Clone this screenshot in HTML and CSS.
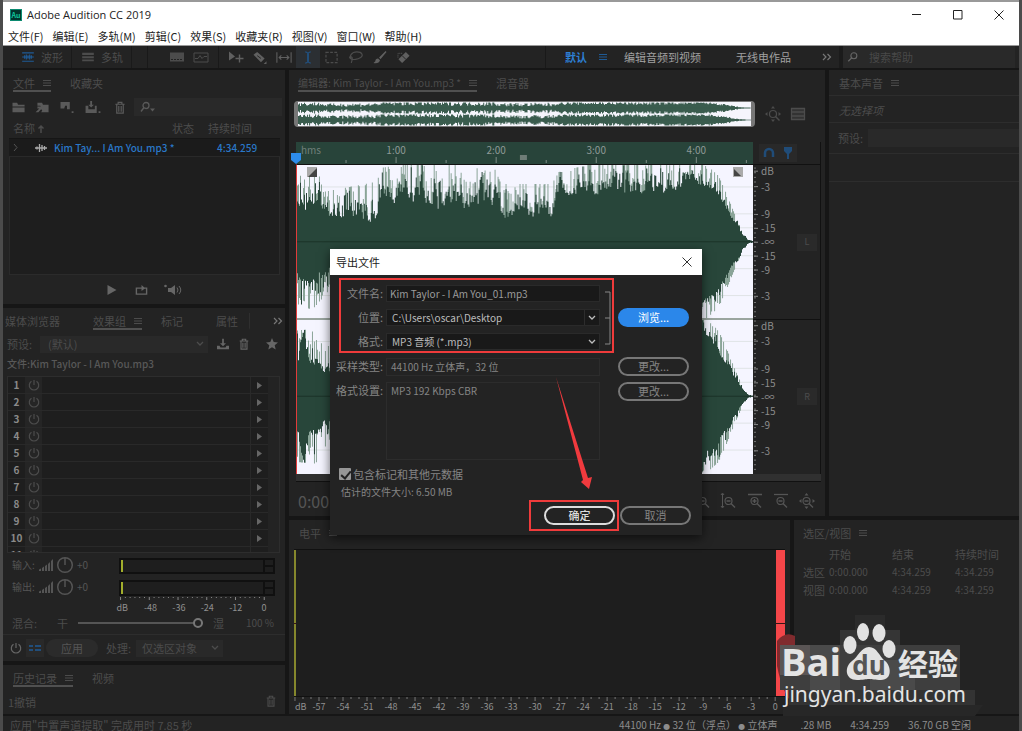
FILE: index.html
```html
<!DOCTYPE html>
<html lang="zh-CN">
<head>
<meta charset="utf-8">
<title>Adobe Audition CC 2019</title>
<link rel="stylesheet" href="styles.css">
</head>
<body>
<svg class="defs" aria-hidden="true">
  <symbol id="menu" viewBox="0 0 8 8"><path d="M0 1.5h8M0 4h8M0 6.5h8" stroke="currentColor"/></symbol>
  <symbol id="chev" viewBox="0 0 8 6"><path d="M1 1l3 3 3-3" fill="none" stroke="currentColor" stroke-width="1.3"/></symbol>
  <symbol id="more" viewBox="0 0 10 8"><path d="M1 1l3 3-3 3M5.500 1l3 3-3 3" fill="none" stroke="currentColor" stroke-width="1.200"/></symbol>
  <symbol id="power" viewBox="0 0 12 12"><path d="M3.500 2.300a4.700 4.700 0 1 0 5 0M6 1v5" fill="none" stroke="currentColor" stroke-width="1.200"/></symbol>
  <symbol id="trash" viewBox="0 0 12 14"><path d="M1 3.500h10M4 3V1.500h4V3M2.500 4v9h7V4M4.700 5.500v6M7.300 5.500v6" fill="none" stroke="currentColor" stroke-width="1.300"/></symbol>
  <symbol id="search" viewBox="0 0 14 12"><circle cx="8" cy="4.500" r="3.500" fill="none" stroke="currentColor" stroke-width="1.300"/><path d="M5.500 7L1.500 11" stroke="currentColor" stroke-width="1.500"/></symbol>
  <symbol id="save" viewBox="0 0 16 14"><path d="M1 9h3l1 2h6l1-2h3v4H1zM7 1h2v5h2.500L8 9.500 4.500 6H7z" fill="currentColor"/></symbol>
  <symbol id="dial" viewBox="0 0 18 18"><circle cx="9" cy="9" r="7.300" fill="none" stroke="currentColor" stroke-width="1.500"/><path d="M9 2v7" stroke="currentColor" stroke-width="1.500"/></symbol>
  <symbol id="ramp" viewBox="0 0 14 12"><path d="M0 12v-1.500l2-1V12zM3 12V9l2-1.500V12zM6 12V7l2-1.500V12zM9 12V5l2-2v9zM12 12V2l2-2v12z" fill="currentColor"/></symbol>
  <symbol id="mag" viewBox="0 0 16 16"><circle cx="7.500" cy="8" r="3.500" fill="none" stroke="currentColor" stroke-width="1.200"/><path d="M10 10.500l4 4M5.500 8h4" stroke="currentColor" stroke-width="1.400"/></symbol>
  <symbol id="star" viewBox="0 0 12 12"><path d="M6 0l1.700 4.100 4.300.4-3.300 2.800 1 4.300L6 9.300l-3.700 2.300 1-4.300L0 4.500l4.300-.4z" fill="currentColor"/></symbol>
</svg>

<div class="window">
  <header class="titlebar">
    <svg class="logo" viewBox="0 0 12 12"><rect width="12" height="12" fill="#00352c"/><rect x=".5" y=".5" width="11" height="11" fill="none" stroke="#0b8a70"/><text x="6" y="8.500" text-anchor="middle" font-size="7" font-weight="bold" fill="#10c59c">Au</text></svg>
    <h1>Adobe Audition CC 2019</h1>
    <div class="caption-buttons">
      <button aria-label="最小化"><svg viewBox="0 0 10 10"><path d="M0 4.500h9"/></svg></button>
      <button aria-label="最大化"><svg viewBox="0 0 10 10"><path d="M.5.5h8.500v8.500H.5z"/></svg></button>
      <button aria-label="关闭"><svg viewBox="0 0 10 10"><path d="M.5.5l9 9M9.500.5l-9 9"/></svg></button>
    </div>
  </header>
  <nav class="menubar">
    <button>文件(F)</button><button>编辑(E)</button><button>多轨(M)</button><button>剪辑(C)</button><button>效果(S)</button><button>收藏夹(R)</button><button>视图(V)</button><button>窗口(W)</button><button>帮助(H)</button>
  </nav>

  <div class="toolbar">
    <button class="mode wave-mode"><svg class="i14 blue" viewBox="0 0 14 12"><path d="M0 1h14M0 11h14M0 6h14M3 4v4M5 3v6M7 4v4M9 3v6M11 4v4" stroke="currentColor" stroke-width="1.300"/></svg>波形</button>
    <button class="mode"><svg class="i14" viewBox="0 0 14 12"><path d="M0 1h14v2.500H0zM0 5h14v2.500H0zM0 9h14v2H0z" fill="currentColor"/></svg>多轨</button>
    <div class="tool-group displays">
      <button class="tool" aria-label="频谱"><svg viewBox="0 0 16 12"><rect x="1" y="1" width="14" height="9" fill="currentColor"/><path d="M2 8h12" stroke="#232323" stroke-dasharray="2 1"/></svg></button>
      <button class="tool" aria-label="音高"><svg viewBox="0 0 16 12"><path d="M1 1.500h14v9H1zM2 7h3l2-3 2 3 2-2h3" fill="none" stroke="currentColor"/></svg></button>
    </div>
    <div class="tool-group">
      <button class="tool bright" aria-label="移动"><svg viewBox="0 0 16 12"><path d="M1 0l6 5-6 4z" fill="currentColor"/><path d="M11.500 3v8M7.500 7h8" stroke="currentColor" stroke-width="1.400"/></svg></button>
      <button class="tool bright" aria-label="切割"><svg viewBox="0 0 16 14"><path d="M1 4l4-3 8 7-4 4z" fill="currentColor"/><path d="M5 5l4 3" stroke="#232323"/><path d="M15 11v3h-3z" fill="currentColor"/></svg></button>
      <button class="tool bright" aria-label="滑动"><svg viewBox="0 0 18 12"><path d="M1 0v12M17 0v12M4 6h10M6 3.500L3.500 6 6 8.500M12 3.500L14.500 6 12 8.500" fill="none" stroke="currentColor" stroke-width="1.200"/></svg></button>
      <button class="tool active" aria-label="时间选择"><svg viewBox="0 0 16 14"><path d="M5 1q3 0 3 2v8q0 2-3 2M11 1q-3 0-3 2v8q0 2 3 2" fill="none" stroke="currentColor"/></svg></button>
      <button class="tool" aria-label="框选"><svg viewBox="0 0 16 14"><path d="M1.500 1.500h12v11h-12z" fill="none" stroke="currentColor" stroke-width="1.300" stroke-dasharray="3 1.500"/></svg></button>
      <button class="tool" aria-label="套索"><svg viewBox="0 0 16 14"><path d="M3 9C0 6 3 1 9 1s7 4 4 6-8 3-11 1 2-3 2 0-1 3-1 5" fill="none" stroke="currentColor" stroke-width="1.200"/></svg></button>
      <button class="tool bright" aria-label="画笔"><svg viewBox="0 0 16 14"><path d="M14 0L7 7l1.500 2L15 1zM6 8q-3 0-3 3l-2 2q6 1 7-3z" fill="currentColor"/></svg></button>
      <button class="tool bright" aria-label="修复"><svg viewBox="0 0 16 14"><path d="M2 9l8-8 4 4-8 8z" fill="currentColor"/><path d="M6 5l4 4" stroke="#232323"/><path d="M1.500 7V2.500H7" fill="none" stroke="currentColor" stroke-dasharray="1 1"/></svg></button>
    </div>
    <div class="workspaces">
      <button class="ws-active">默认</button><svg class="i8 blue" ><use href="#menu"/></svg>
      <button class="ws-video">编辑音频到视频</button>
      <button class="ws-radio">无线电作品</button>
      <svg class="i10"><use href="#more"/></svg>
    </div>
    <label class="help-search"><svg class="i12"><use href="#search"/></svg><input type="text" placeholder="搜索帮助" aria-label="搜索帮助"></label>
  </div>

  <main class="workspace">
    <div class="left-column">
      <section class="panel files">
        <div class="tabs"><button class="tab selected">文件 <svg class="i8"><use href="#menu"/></svg></button><button class="tab">收藏夹</button></div>
        <div class="file-tools">
          <svg viewBox="0 0 16 14"><path d="M1 2h5l1 2h7v2H1zM1 7h13v5H1z" fill="currentColor"/></svg>
          <svg viewBox="0 0 16 14"><path d="M2 2h5l1 2h6v8H6l2-3-3-4H2zM0 12l4-4H2V6h6v5l-2-2-3 3z" fill="currentColor"/></svg>
          <svg viewBox="0 0 16 14"><path d="M1 1h10v8H8V5H6L5 8H1zM13 11h2v2h-2z" fill="currentColor"/></svg>
          <svg class="wide" viewBox="0 0 18 14"><path d="M1 5h3v4h7V5h2v8H1zM6 0h2v4h2L7 7 4 4h2zM15 11h2v2h-2z" fill="currentColor"/></svg>
          <svg class="narrow"><use href="#trash"/></svg>
          <label class="file-search"><svg viewBox="0 0 16 12"><circle cx="7" cy="4" r="3" fill="none" stroke="currentColor" stroke-width="1.300"/><path d="M5 6L2 10" stroke="currentColor" stroke-width="1.400"/><path d="M11 7h5l-2.500 3z" fill="currentColor"/></svg><input type="text" aria-label="筛选文件"></label>
        </div>
        <table class="file-table">
          <thead><tr><th class="c-name">名称 <svg class="i8" viewBox="0 0 8 8"><path d="M4 8V1M1.500 3.500L4 1l2.500 2.500" fill="none" stroke="currentColor" stroke-width="1.500"/></svg></th><th class="c-state">状态</th><th>持续时间</th></tr></thead>
          <tbody><tr><td><div class="file-name"><svg class="i6" viewBox="0 0 6 8"><path d="M1 0l3 3.500L1 7" fill="none" stroke="#555"/></svg><svg class="i12" viewBox="0 0 12 10"><path d="M0 5h12M2 3.500v3M4.500 1v8M7 2v6M9.500 3v4" stroke="#aaa" stroke-width="1.300"/></svg>Kim Tay... I Am You.mp3 *</div></td><td></td><td class="c-time">4:34.259</td></tr></tbody>
        </table>
        <div class="file-space"></div>
        <div class="transport">
          <svg viewBox="0 0 12 12"><path d="M1 1l9 5-9 5z" fill="currentColor"/></svg>
          <svg viewBox="0 0 14 12"><path d="M4 4H1.500v6.500h11V4H10M3.500 4H9" fill="none" stroke="currentColor" stroke-width="1.500"/><path d="M7 .5L11 4 7 7z" fill="currentColor"/></svg>
          <svg class="speaker" viewBox="0 0 18 12"><circle cx="1.500" cy="2" r="1.300" fill="currentColor"/><path d="M4 4h3l4-3v10L7 8H4z" fill="currentColor"/><path d="M13 3.500q2 2.500 0 5M15 2q3.500 4 0 8" fill="none" stroke="currentColor"/></svg>
        </div>
      </section>

      <section class="panel effects">
        <div class="tabs effect-tabs"><button class="tab">媒体浏览器</button><button class="tab selected">效果组 <svg class="i8"><use href="#menu"/></svg></button><button class="tab">标记</button><button class="tab">属性</button><svg class="i10"><use href="#more"/></svg></div>
        <div class="preset-row"><label for="preset">预设:</label><div class="select-wrap"><select id="preset"><option>(默认)</option></select><svg class="i8"><use href="#chev"/></svg></div><svg class="i14"><use href="#save"/></svg><svg class="i12"><use href="#trash"/></svg><svg class="i12 star"><use href="#star"/></svg></div>
        <p class="rack-file">文件:Kim Taylor - I Am You.mp3</p>
        <ol class="rack" id="rack"></ol>
        <div class="io">
          <div class="io-controls">
            <span>输入:</span><svg class="i14"><use href="#ramp"/></svg><svg class="i18"><use href="#dial"/></svg><span>+0</span>
            <span>输出:</span><svg class="i14"><use href="#ramp"/></svg><svg class="i18"><use href="#dial"/></svg><span>+0</span>
          </div>
          <div class="io-meters"><div class="mini-meter"></div><div class="mini-meter"></div><svg class="mini-scale" id="mini-scale"></svg></div>
        </div>
        <div class="mix"><label for="mix">混合:</label><span class="dry">干</span><input type="range" id="mix" value="100"><span>湿</span><output>100 %</output></div>
        <div class="rack-footer"><button class="icon-button" aria-label="电源"><svg class="i12"><use href="#power"/></svg></button><button class="icon-button lit" aria-label="列表"><svg class="i12" viewBox="0 0 12 8"><path d="M0 2h4M6 2h6M0 6h4M6 6h6" stroke="currentColor" stroke-width="1.500"/></svg></button><button class="apply">应用</button><label for="process">处理:</label><div class="select-wrap process"><select id="process"><option>仅选区对象</option></select><svg class="i8"><use href="#chev"/></svg></div></div>
      </section>

      <section class="panel history">
        <div class="tabs"><button class="tab selected">历史记录 <svg class="i8"><use href="#menu"/></svg></button><button class="tab">视频</button></div>
        <div class="history-row"><span>1撤销</span><svg class="i12"><use href="#trash"/></svg></div>
      </section>
    </div>

    <div class="right-area">
      <div class="upper">
        <section class="panel editor">
          <div class="tabs editor-tabs"><button class="tab selected">编辑器: Kim Taylor - I Am You.mp3 * <svg class="i8"><use href="#menu"/></svg></button><button class="tab">混音器</button></div>
          <div class="overview-row"><div class="overview"><svg id="overview" viewBox="0 0 450 24" preserveAspectRatio="none"></svg></div>
            <svg class="i16" viewBox="0 0 16 16"><circle cx="8" cy="8" r="3.500" fill="none" stroke="currentColor" stroke-width="1.200"/><path d="M10.500 10.500l4 4" stroke="currentColor" stroke-width="1.400"/><path d="M8 0l2 2.500H6zM0 8l2.500-2v4zM16 8l-2.500-2v4zM8 16l-2-2.500h4z" fill="currentColor"/></svg>
            <svg class="i14" viewBox="0 0 14 12"><path d="M.5.5h13v11H.5zM1 4h12M1 8h12" fill="#333" stroke="currentColor" stroke-width="1.300"/></svg></div>
          <div class="timeline">
            <svg class="ruler" id="ruler"></svg>
            <div class="ruler-buttons">
              <button aria-label="对齐"><svg class="i12" viewBox="0 0 12 12"><path d="M2 10V6a4 4 0 0 1 8 0v4" fill="none" stroke="#204c78" stroke-width="2.500"/></svg></button>
              <button aria-label="标记"><svg class="i12" viewBox="0 0 12 12"><path d="M2 0h8v4L7 7v5H5V7L2 4z" fill="#204c78"/></svg></button>
            </div>
            <div class="wave"><svg id="wave" viewBox="0 0 457 310" preserveAspectRatio="none"></svg><svg class="fade fade-in" viewBox="0 0 10 10"><path d="M0 0h10v10H0z" fill="#aaa"/><path d="M10 1v9H1z" fill="#444"/></svg><svg class="fade fade-out" viewBox="0 0 10 10"><path d="M0 0h10v10H0z" fill="#aaa"/><path d="M1 2l7 7H1z" fill="#444"/></svg></div>
            <div class="db-area"><svg class="db-scale" id="db-scale"></svg><div class="channels"><button>L</button><button>R</button></div></div>
            <svg class="playhead" viewBox="0 0 10 12"><path d="M0 0h10v7L5 11 0 7z" fill="#2d8ceb"/></svg>
          </div>
          <div class="h-scroll"></div>
          <div class="editor-footer"><span class="timecode">0:00.</span>
            <div class="zooms"><svg class="i16"><use href="#mag"/></svg>
            <svg class="i16" viewBox="0 0 16 16"><use href="#mag" width="16" height="16"/><path d="M1.500 1v13M0 2l1.500-2L3 2M0 13l1.500 2L3 13" fill="none" stroke="currentColor"/></svg>
            <svg class="i16" viewBox="0 0 16 16"><use href="#mag" width="16" height="16"/><path d="M1 1.500h14M7.500 6v4" stroke="currentColor" stroke-width="1.300"/></svg>
            <svg class="i16" viewBox="0 0 16 16"><use href="#mag" width="16" height="16"/><path d="M1 1.500h14" stroke="currentColor" stroke-width="1.300"/></svg>
            <svg class="i16" viewBox="0 0 16 16"><use href="#mag" width="16" height="16"/><path d="M7.500 0l2 2.500h-4zM0 8l2.500-2v4zM16 8l-2.500-2v4zM7.500 16l-2-2.500h4z" fill="currentColor"/></svg></div>
          </div>
        </section>
        <section class="panel sound">
          <div class="tabs"><button class="tab">基本声音 <svg class="i8"><use href="#menu"/></svg></button></div>
          <p class="no-selection">无选择项</p>
          <div class="sound-preset"><label for="sp">预设:</label><input id="sp" type="text"></div>
          <div class="sound-blank"></div>
        </section>
      </div>
      <div class="lower">
        <section class="panel levels">
          <div class="tabs"><button class="tab">电平 <svg class="i8"><use href="#menu"/></svg></button></div>
          <div class="level-meter"><i class="floor"></i><i class="clip"></i></div>
          <svg class="level-scale" id="level-scale"></svg>
        </section>
        <section class="panel selection">
          <div class="tabs"><button class="tab">选区/视图 <svg class="i8"><use href="#menu"/></svg></button></div>
          <table><thead><tr><td></td><th>开始</th><th>结束</th><th>持续时间</th></tr></thead>
          <tbody><tr><th>选区</th><td>0:00.000</td><td>4:34.259</td><td>4:34.259</td></tr><tr><th>视图</th><td>0:00.000</td><td>4:34.259</td><td>4:34.259</td></tr></tbody></table>
        </section>
      </div>
    </div>
  </main>

  <footer class="status"><span>应用"中置声道提取" 完成用时 7.85 秒</span><div class="status-info"><span class="s-format">44100 Hz <i>●</i> 32 位（浮点） <i>●</i> 立体声</span><span class="s-size">.28 MB</span><span class="s-time">4:34.259</span><span class="s-free">36.70 GB 空闲</span></div></footer>
</div>

<div class="dialog" role="dialog" aria-labelledby="dlg-title">
  <header><h2 id="dlg-title">导出文件</h2><button aria-label="关闭"><svg viewBox="0 0 10 10"><path d="M.5.5l9 9M9.500.5l-9 9" stroke="#333" fill="none"/></svg></button></header>
  <form class="export">
    <div class="fields marked">
      <label for="fn">文件名:</label><input id="fn" type="text" value="Kim Taylor - I Am You_01.mp3">
      <label for="loc">位置:</label><div class="select-wrap boxed"><select id="loc"><option>C:\Users\oscar\Desktop</option></select><svg class="i8"><use href="#chev"/></svg></div>
      <label for="fmt">格式:</label><div class="select-wrap"><select id="fmt"><option>MP3 音频 (*.mp3)</option></select><svg class="i8"><use href="#chev"/></svg></div>
      <svg class="bracket" viewBox="0 0 6 54"><path d="M0 1h5v52H0M0 27h5" fill="none" stroke="#888"/></svg>
    </div>
    <button type="button" class="pill primary">浏览...</button>
    <div class="fields plain first"><label for="rate">采样类型:</label><output id="rate">44100 Hz 立体声，32 位</output></div>
    <button type="button" class="pill first">更改...</button>
    <div class="fields plain"><label for="set">格式设置:</label><output id="set" class="tall">MP3 192 Kbps CBR</output></div>
    <button type="button" class="pill top">更改...</button>
    <div class="notes"><label class="check"><input type="checkbox" checked><span>包含标记和其他元数据</span></label><p>估计的文件大小: 6.50 MB</p></div>
    <div class="actions"><div class="ok-mark"><button type="button" class="pill ok">确定</button></div><button type="button" class="pill">取消</button></div>
  </form>
  <svg class="arrow" viewBox="0 0 40 116"><path d="M3 1L35 102l4-1-3 12-8-7 2-2z" fill="#f03a3e"/></svg>
</div>

<div class="watermark">
  <svg class="mosaic" viewBox="0 0 210 116">
    <path d="M2 26q8-10 18-5v70q-12-10-18-40z" fill="#802b2e"/>
    <path d="M80 0h30v15H80z" fill="#2b2b2b"/><path d="M65 15h60v15H65z" fill="#353535"/>
    <path d="M5 30h180v45H5z" fill="#3e3e3e"/><path d="M35 30h30v45H35zM95 45h45v30H95z" fill="#4a4a4a"/><path d="M5 30h30v30H5z" fill="#5a5555"/>
    <path d="M14 75h186v15H14z" fill="#333"/><path d="M8 90h200l-8 11H8z" fill="#272727"/>
  </svg>
  <div class="brand"><span>Bai</span><svg class="paw" viewBox="0 0 54 60"><g fill="#e2e2e2"><ellipse cx="8" cy="23" rx="6.500" ry="9"/><ellipse cx="21" cy="10" rx="6" ry="9"/><ellipse cx="37" cy="11" rx="6.500" ry="9"/><ellipse cx="47" cy="27" rx="6.500" ry="9"/><path d="M27 25c8 0 10 9 16 14 6 4 8 19-4 19-6 0-9-1-12-1s-6 1-12 1C3 58 2 45 10 39c6-4 9-14 17-14z"/></g><text x="27" y="53" text-anchor="middle">du</text></svg><span class="cn">经验</span></div>
  <div class="site">jingyan.baidu.com</div>
</div>
<script src="app.js"></script>
</body>
</html>
```
FILE: styles.css
```css
* { box-sizing: border-box; }
body, h1, h2, p, ol { margin: 0; padding: 0; }
body { background: #4b4b4b; color: #4c4c4c; font: 11px/14px "Noto Sans CJK SC", sans-serif; height: 100vh; overflow: hidden; position: relative; }
button, input, select { font: inherit; color: inherit; background: none; border: 0; padding: 0; margin: 0; }
button, label, span, output { white-space: nowrap; }
svg { display: block; flex: none; overflow: visible; }
.defs { position: absolute; width: 0; height: 0; }
.i6 { width: 6px; height: 8px; }
.i8 { width: 8px; height: 8px; }
.i10 { width: 10px; height: 8px; }
.i12 { width: 12px; height: 12px; }
.i14 { width: 14px; height: 12px; }
.i16 { width: 16px; height: 16px; }
.i18 { width: 18px; height: 18px; }
.blue { color: #1f5b96; }

.window { display: flex; flex-direction: column; height: 100vh; margin: 0 3px; background: #161616; border-top: 2px solid #999; }
.titlebar { display: flex; align-items: center; height: 26px; flex: none; background: #fff; padding: 0 0 0 7px; }
.logo { width: 12px; height: 12px; margin-right: 5px; }
.titlebar h1 { font: 11px/14px "Open Sans", sans-serif; color: #222; flex: 1; }
.caption-buttons { display: flex; }
.caption-buttons button { width: 41px; display: grid; place-items: center; }
.caption-buttons svg { width: 10px; height: 10px; fill: none; stroke: #222; }
.menubar { display: flex; align-items: center; flex: none; gap: 9px; height: 18px; background: #fff; color: #222; padding: 0 5px 2px; border-bottom: 1px solid #999; }

.toolbar { display: flex; align-items: stretch; flex: none; height: 22px; background: #232323; margin-bottom: 2px; }
.mode { display: flex; align-items: center; gap: 6px; padding: 0 8px 0 9px; border-right: 1px solid #1a1a1a; }
.mode .i14 { height: 10px; }
.wave-mode { margin-left: 9px; }
.tool-group { display: flex; border-left: 1px solid #191919; padding: 0 5px; }
.displays { margin-left: 15px; padding: 0 5px 0 17px; }
.tool { width: 24px; display: grid; place-items: center; }
.tool svg { width: 16px; height: 13px; }
.tool.bright { color: #606060; }
.tool.active { color: #1f5b96; background: #2b2f33; }
.workspaces { display: flex; align-items: center; flex: 1; margin-left: 124px; border-left: 1px solid #191919; padding: 0 7px 0 19px; color: #a0a0a0; }
.ws-active { color: #2d7fd4; font-weight: 700; margin-right: 12px; }
.ws-video { margin-left: 17px; }
.ws-radio { margin: 0 auto 0 35px; }
.workspaces .i10 { color: #777; }
.help-search { display: flex; align-items: center; gap: 10px; width: 176px; background: #292929; border-left: 4px solid #1b1b1b; padding-left: 4px; margin-right: 4px; color: #666; }
.help-search input { width: 100px; }
::placeholder { color: #484848; opacity: 1; }

.workspace { display: flex; flex: 1; gap: 4px; min-height: 0; }
.left-column { width: 282px; flex: none; display: flex; flex-direction: column; gap: 4px; }
.right-area { flex: 1; display: flex; flex-direction: column; gap: 4px; min-width: 0; }
.upper, .lower { display: flex; gap: 4px; }
.upper { flex: 1; min-height: 0; }
.lower { height: 194px; flex: none; }
.panel { background: #232323; overflow: hidden; }

.tabs { display: flex; gap: 19px; padding: 5px 10px 0; height: 24px; }
.tab { display: flex; align-items: center; gap: 8px; height: 17px; border-bottom: 2px solid transparent; }
.tab.selected { border-color: #505050; }

.files { height: 234px; flex: none; display: flex; flex-direction: column; }
.file-tools { display: flex; align-items: center; gap: 8px; height: 20px; margin-top: 3px; padding: 0 3px 0 8px; color: #5a5a5a; }
.file-tools svg { width: 16px; height: 13px; }
.file-tools .wide { width: 20px; }
.file-tools .narrow { width: 12px; margin-left: 3px; }
.file-search { flex: 1; display: flex; align-items: center; height: 18px; background: #292929; padding-left: 5px; }
.file-search input { width: 60px; }
.file-table { border-collapse: collapse; table-layout: fixed; width: calc(100% - 11px); margin: 1px 5px 0 6px; }
.file-table th { text-align: left; font-weight: 400; padding: 3px 0 3px 4px; height: 19px; }
.file-table th svg { display: inline-block; }
.c-name { width: 159px; }
.c-state { width: 36px; }
.file-table td { background: #1b1b1b; color: #2a78c8; font-size: 10px; font-weight: 500; padding: 0; height: 18px; border-top: 1px solid #161616; border-bottom: 1px solid #292929; white-space: nowrap; }
.file-name { display: flex; align-items: center; width: 180px; padding-left: 4px; }
.file-name .i12 { margin: 0 7px 0 16px; }
.file-table .c-time { padding-left: 13px; }
.file-space { flex: 1; margin: 0 5px 0 6px; background: #1e1e1e; border: 1px solid #2b2b2b; border-top: 0; }
.transport { display: flex; justify-content: center; align-items: center; gap: 16px; height: 29px; color: #666; }
.transport svg { width: 13px; height: 12px; }
.transport .speaker { width: 18px; }

.effects { flex: 1; min-height: 0; display: flex; flex-direction: column; }
.effect-tabs { gap: 19px; padding: 5px 2px 0; }
.effect-tabs .tab:first-child { margin-right: 14px; }
.effect-tabs .tab:nth-child(4) { margin-left: 14px; padding-right: 11px; border-right: 1px solid #2f2f2f; }
.effect-tabs .i10 { margin: 4px 0 0 auto; color: #777; }
.preset-row { display: flex; align-items: center; gap: 8px; height: 24px; padding: 0 7px 0 4px; }
.select-wrap { display: flex; align-items: center; height: 17px; background: #292929; padding: 0 4px 0 8px; flex: 1; }
.select-wrap select { appearance: none; flex: 1; min-width: 0; outline: 0; }
.preset-row .i14, .preset-row .i12 { color: #666; }
.star { margin-left: 8px; }
.rack-file { padding: 1px 4px 5px; color: #585858; font-size: 10px; font-weight: 500; }
.rack { list-style: none; height: 177px; flex: none; overflow: hidden; margin: 0 5px 0 4px; border: 1px solid #2d2d2d; padding-right: 11px; }
.rack li { display: grid; grid-template-columns: 17px 17px 1fr 18px; align-items: center; height: 17px; border-bottom: 1px solid #292929; background: #1e1e1e; }
.rack b { color: #8a8a8a; font-size: 10px; font-weight: 700; text-align: center; }
.rack button { height: 16px; background: #252525; display: grid; place-items: center; }
.rack button svg { width: 12px; height: 12px; }
.rack .arrow-cell { height: 16px; border-left: 1px solid #292929; display: grid; place-items: center; color: #666; }
.rack .arrow-cell svg { width: 5px; height: 7px; }
.io { display: flex; gap: 24px; padding: 3px 10px 0 9px; height: 58px; }
.io-controls { display: grid; grid-template-columns: 24px 14px 18px 18px; grid-template-rows: 18px 18px; gap: 4px 3px; align-items: center; height: 40px; color: #555; }
.io-controls span { font-size: 10px; }
.io-meters { flex: 1; display: flex; flex-direction: column; gap: 6px; padding-top: 2px; }
.mini-meter { height: 16px; flex: none; border: 2px solid #101010; background: linear-gradient(90deg, #a2ae2c 2px, transparent 2px), linear-gradient(#101010, #101010) right 8px top / 2px 100% no-repeat, linear-gradient(#1e1e1e 5px, #101010 5px, #101010 7px, #1e1e1e 7px) right / 10px 100% no-repeat, #1e1e1e; }
.mini-scale { width: 100%; height: 18px; margin-top: -5px; }
.mini-scale text, .level-scale text { font-size: 9px; fill: #909090; }
.mix { display: flex; align-items: center; gap: 10px; height: 24px; padding: 0 11px 0 9px; border-bottom: 1px solid #2d2d2d; }
.dry { margin-left: 10px; }
.mix input { appearance: none; flex: 1; min-width: 0; height: 2px; background: #555; }
.mix input::-webkit-slider-thumb { appearance: none; width: 10px; height: 10px; border: 2px solid #777; border-radius: 50%; background: #232323; }
.mix output { margin-left: 12px; font-size: 10px; }
.rack-footer { display: flex; align-items: center; height: 26px; padding-left: 4px; }
.icon-button { width: 18px; height: 18px; display: grid; place-items: center; color: #666; margin-right: 1px; }
.icon-button.lit { background: #292929; color: #1f5b96; }
.apply { width: 52px; height: 18px; border-radius: 9px; background: #2b2b2b; margin: 0 8px 0 1px; color: #555; }
.process { flex: none; width: 87px; margin-left: 5px; padding-left: 6px; }

.history { height: 49px; flex: none; }
.history-row { display: flex; justify-content: space-between; padding: 6px 8px 0 5px; }

.editor { flex: 1; min-width: 0; display: flex; flex-direction: column; }
.editor-tabs { padding-left: 9px; font-size: 10px; }
.editor-tabs .tab:last-child { font-size: 11px; }
.overview-row { display: flex; align-items: center; gap: 10px; padding: 0 20px 0 5px; margin-top: 7px; }
.overview { flex: 1; height: 26px; background: #f5f5fc; border: 1px solid #777; border-width: 1px 4px; border-radius: 4px; overflow: hidden; }
.overview svg { width: 100%; height: 24px; }
.timeline { position: relative; flex: 1; min-height: 0; display: grid; grid-template-columns: 1fr 67px; grid-template-rows: 22px 1fr; margin: 15px 4px 0 7px; border-right: 1px solid #111; }
.ruler { width: 100%; height: 22px; background: #28443a; }
.ruler text { font-size: 10px; fill: #8f9a96; }
.ruler-buttons { display: flex; padding: 2px 6px; }
.ruler-buttons button { width: 19px; height: 18px; display: grid; place-items: center; background: #292929; }
.wave { position: relative; min-height: 0; background: #f5f5ff; border-left: 1px solid #e23b3b; border-top: 1px solid #111; }
.wave > svg:first-child { position: absolute; inset: 0; width: 100%; height: 100%; }
.fade { position: absolute; top: 2px; width: 10px; height: 10px; }
.fade-in { left: 10px; }
.fade-out { right: 10px; }
.db-area { position: relative; border-top: 1px solid #111; }
.db-scale { position: absolute; inset: 0; width: 100%; height: 100%; }
.db-scale text { font-size: 10px; fill: #8c8c8c; }
.channels { position: absolute; inset: 0 3px 0 auto; display: flex; flex-direction: column; justify-content: space-around; }
.channels button { width: 20px; height: 17px; background: #2a2a2a; font-size: 9px; }
.playhead { position: absolute; left: -5px; top: 11px; width: 10px; height: 12px; }
.h-scroll { height: 8px; flex: none; margin: 0 4px 0 7px; background: #303030; border-bottom: 1px solid #111; }
.editor-footer { display: flex; justify-content: space-between; align-items: center; height: 34px; flex: none; padding: 3px 10px 0 9px; color: #555; }
.timecode { font-size: 16px; line-height: 20px; }
.zooms { display: flex; gap: 10px; }

.sound { width: 190px; flex: none; }
.sound .tabs { height: 26px; border-bottom: 1px solid #2d2d2d; }
.no-selection { font-style: italic; height: 27px; padding: 7px 10px; border-bottom: 1px solid #2d2d2d; }
.sound-preset { display: flex; align-items: center; gap: 5px; padding-left: 9px; height: 31px; border-bottom: 1px solid #2d2d2d; }
.sound-preset input { flex: 1; min-width: 0; height: 18px; background: #292929; }
.sound-blank { height: 28px; border-bottom: 1px solid #2d2d2d; }

.levels { flex: 1; min-width: 0; display: flex; flex-direction: column; padding: 0 5px; }
.levels .tabs { padding-left: 5px; }
.level-meter { display: flex; justify-content: space-between; height: 148px; margin-top: 5px; background: #1e1e1e; border: solid #111; border-width: 1px 0; }
.level-meter i { background: linear-gradient(currentColor 73px, #3a1515 73px, #3a1515 74px, currentColor 74px); }
.floor { width: 2px; color: #85872c; }
.clip { width: 9px; color: #f44649; }
.level-scale { width: 100%; height: 17px; }
.selection { width: 225px; flex: none; }
.selection .tabs { padding-left: 9px; }
.selection table { border-collapse: collapse; margin: 1px 0 0 9px; width: 206px; table-layout: fixed; }
.selection th, .selection td { font-weight: 400; text-align: left; padding: 2px 0; }
.selection td:first-child, .selection tr > :first-child { width: 26px; }
.selection thead th:nth-child(2) { width: 63px; }
.selection thead th:nth-child(3) { width: 63px; }
.selection td { font-size: 10px; }

.status { display: flex; justify-content: space-between; height: 15px; flex: none; margin-top: 2px; padding: 2px 48px 0 7px; background: #232323; overflow: hidden; }
.status-info { display: flex; gap: 19px; color: #8c8c8c; font-size: 10px; }
.status-info i { font: 8px/14px "DejaVu Sans", sans-serif; }
.s-format { margin-right: 4px; }

.dialog { position: absolute; left: 330px; top: 249px; width: 372px; height: 286px; background: #232323; box-shadow: 0 3px 10px #0009; color: #858585; }
.dialog header { display: flex; align-items: center; justify-content: space-between; height: 26px; background: #fff; padding: 0 10px 0 6px; }
.dialog h2 { font-size: 11px; line-height: 14px; font-weight: 400; color: #222; }
.dialog header svg { width: 10px; height: 10px; }
.export { display: grid; grid-template-columns: 275px 71px; column-gap: 4px; align-items: center; padding: 3px 9px 0; }
.fields { display: grid; grid-template-columns: 45px 214px 5px 6px; gap: 7px 0; }
.fields label { text-align: right; line-height: 17px; margin-right: 3px; }
.marked { border: 2px solid #ef3b3b; padding: 5px 0 1px; }
.marked label { grid-column: 1; }
.marked input, .marked .select-wrap { grid-column: 2; height: 17px; background: #191919; border: 1px solid #2a2a2a; color: #bdbdbd; font-size: 10px; }
.marked input { padding: 0 3px; color: #9c9c9c; min-width: 0; }
.marked .select-wrap { padding: 0 3px 0 5px; }
.boxed select { border-right: 1px solid #2d2d2d; height: 15px; margin-right: 3px; }
.bracket { grid-column: 4; grid-row: 1 / 4; width: 6px; height: 54px; align-self: center; }
.plain { padding-left: 2px; margin-top: 6px; align-items: start; }
.plain label { margin-left: -8px; }
.plain output { border: 1px solid #2c2c2c; height: 18px; padding: 1px 4px; font-size: 10px; }
.plain .tall { height: 78px; }
.pill { width: 71px; height: 19px; border: 2px solid #777; border-radius: 10px; line-height: 13px; color: #858585; }
.pill.primary { background: #2b87ea; border-color: #2b87ea; color: #fff; margin-top: 3px; }
.pill.first, .plain.first { margin-top: 4px; }
.pill.top { align-self: start; margin-top: 6px; }
.notes { grid-column: 1 / 3; padding-top: 6px; }
.check { display: flex; align-items: center; gap: 2px; height: 16px; }
.check input { appearance: none; width: 12px; height: 12px; background: #969696; border-radius: 1px; position: relative; }
.check input::after { content: ""; position: absolute; left: 4px; top: 1px; width: 4px; height: 8px; border: solid #222; border-width: 0 2px 2px 0; transform: rotate(40deg); }
.notes p { margin: 3px 0 0 2px; line-height: 14px; font-size: 10px; }
.actions { grid-column: 1 / 3; display: flex; align-items: center; justify-content: flex-end; gap: 1px; margin-right: -2px; }
.ok-mark { border: 2px solid #ef3b3b; width: 90px; height: 31px; display: grid; place-items: center end; padding-right: 2px; margin-top: 1px; }
.pill.ok { border-color: #ddd; color: #ddd; font-weight: 500; }
.arrow { position: absolute; left: 223px; top: 127px; width: 40px; height: 116px; }

.watermark { position: absolute; right: 37px; bottom: 0; width: 210px; height: 116px; color: #e4e4e4; }
.mosaic { position: absolute; inset: 0; width: 210px; height: 116px; }
.brand { position: relative; display: flex; align-items: flex-end; height: 68px; padding-left: 6px; }
.brand span { font: 700 38px/44px "Open Sans", sans-serif; }
.paw { width: 54px; height: 60px; margin: 0 2px 1px 1px; }
.paw text { font: 700 26px "Open Sans", sans-serif; fill: #555; }
.brand .cn { font: 700 30px/42px "Noto Sans CJK SC", sans-serif; }
.site { position: relative; margin-top: -2px; padding-left: 9px; font: 21px/26px "Noto Sans", sans-serif; }
```
FILE: app.js
```js
const NS = 'http://www.w3.org/2000/svg';
const byId = id => document.getElementById(id);

function add(parent, tag, attrs, text) {
  const el = document.createElementNS(NS, tag);
  for (const k in attrs) el.setAttribute(k, attrs[k]);
  if (text !== undefined) el.textContent = text;
  parent.appendChild(el);
}

let seed = 7;
function random() {
  seed = (seed * 16807) % 2147483647;
  return seed / 2147483647;
}

// [x, quiet level, loud level], interpolated between stops
const stops = [[0, 30, 66], [22, 30, 68], [26, 20, 50], [78, 18, 60], [82, 36, 74], [105, 36, 77], [190, 28, 77], [196, 34, 77],
  [204, 22, 58], [255, 20, 58], [262, 45, 70], [290, 46, 77], [350, 44, 77], [410, 55, 77], [422, 42, 66], [430, 32, 48],
  [438, 17, 28], [446, 6, 10], [452, 1, 3], [457, 0, 1]];

function level(x) {
  let i = 1;
  while (i < stops.length - 1 && stops[i][0] < x) i++;
  const [x0, a0, b0] = stops[i - 1], [x1, a1, b1] = stops[i];
  const t = Math.min(1, Math.max(0, (x - x0) / (x1 - x0)));
  return [a0 + (a1 - a0) * t, b0 + (b1 - b0) * t];
}

function drawWave() {
  const svg = byId('wave');
  for (const y of [22, 49, 63, 91, 104, 131, 177, 204, 218, 246, 259, 286]) add(svg, 'path', { d: `M0 ${y}h457`, stroke: '#dfe3e6' });
  for (const mid of [77, 232]) {
    let dark = '', light = '';
    let bump = 0.3;
    for (let x = 0; x < 457; x++) {
      const [lo, hi] = level(x);
      bump = bump * 0.6 + random() * 0.4;
      const up = lo + (hi - lo) * (random() > 0.88 ? random() : bump * bump * 1.4);
      const down = lo + (hi - lo) * (random() > 0.88 ? random() : bump * bump * 1.4);
      dark += `M${x} ${mid - up}h1V${mid + down}h-1z`;
      if (random() > 0.5 && x < 445) light += `M${x} ${mid - Math.min(hi, up + 30 * random())}h1V${mid + Math.min(hi, down + 30 * random())}h-1z`;
    }
    add(svg, 'path', { d: light, fill: '#8aa498' });
    add(svg, 'path', { d: dark, fill: '#28463a' });
    add(svg, 'path', { d: `M0 ${mid}h457`, stroke: '#1b3329' });
  }
  add(svg, 'path', { d: 'M0 154.500h457', stroke: '#9aa59f', 'stroke-width': 2 });
}

function drawOverview() {
  const svg = byId('overview');
  for (const mid of [6, 18]) {
    let d = '';
    for (let x = 0; x < 450; x++) {
      const a = level(x * 457 / 450);
      const h = Math.min(5.5, (a[0] * 0.7 + (a[1] - a[0]) * random()) / 10);
      d += `M${x} ${mid - h}h1V${mid + h}h-1z`;
    }
    add(svg, 'path', { d, fill: '#3a5c4e' });
    add(svg, 'path', { d: `M0 ${mid}h450`, stroke: '#3a5c4e', 'stroke-width': 0.6 });
  }
}

function drawRuler() {
  const svg = byId('ruler');
  add(svg, 'text', { x: 5, y: 12, opacity: 0.7 }, 'hms');
  for (let i = 1; i < 10; i++) {
    const x = (i * 10.95) + '%';
    add(svg, 'line', { x1: x, x2: x, y1: i % 2 ? 18 : 15, y2: 21, stroke: '#7f8c86' });
    if (i % 2 === 0) add(svg, 'text', { x, y: 12, 'text-anchor': 'middle' }, `${i / 2}:00`);
  }
  add(svg, 'rect', { x: '49%', y: 13, width: 7, height: 5, fill: '#6f7d77' });
}

function drawDb() {
  const svg = byId('db-scale');
  const marks = [[2, 'dB'], [7, '-3'], [16, '-9'], [20.5, '-15'], [25, '-∞'], [29.5, '-15'], [34, '-9'], [42.5, '-3']];
  for (const base of [0, 50]) for (const [p, t] of marks) {
    add(svg, 'text', { x: 8, y: base + p + '%', dy: 4 }, t);
    add(svg, 'line', { x1: 1, x2: 5, y1: base + p + '%', y2: base + p + '%', stroke: '#888' });
  }
  for (let p = 1; p < 100; p += 1.5) add(svg, 'line', { x1: 1, x2: 3, y1: p + '%', y2: p + '%', stroke: '#777' });
  add(svg, 'line', { x1: 0, x2: '100%', y1: '50%', y2: '50%', stroke: '#111' });
}

function drawLevels() {
  const svg = byId('level-scale');
  for (let i = 0; i <= 60; i++) {
    const x = i * 1.63 + 0.2 + '%';
    add(svg, 'line', { x1: x, x2: x, y1: 0, y2: i % 3 ? 2 : 4, stroke: '#777' });
    if (i % 3 === 0) add(svg, 'text', { x, y: 13, 'text-anchor': i ? 'middle' : 'start' }, i ? String(i - 60) : 'dB');
  }
  const mini = byId('mini-scale');
  for (let i = 0; i <= 30; i++) add(mini, 'line', { x1: 1 + i * 3.07 + '%', x2: 1 + i * 3.07 + '%', y1: 0, y2: i % 6 ? 1 : 3, stroke: '#888' });
  ['dB', '-48', '-36', '-24', '-12', '0'].forEach((t, i) => add(mini, 'text', { x: 2 + i * 18.2 + '%', y: 14, 'text-anchor': 'middle' }, t));
}

function buildRack() {
  for (let i = 1; i <= 11; i++) {
    const li = document.createElement('li');
    li.innerHTML = `<b>${i}</b><button aria-label="电源 ${i}"><svg><use href="#power"/></svg></button><span></span><span class="arrow-cell"><svg viewBox="0 0 5 7"><path d="M0 0l5 3.500-5 3.500z" fill="currentColor"/></svg></span>`;
    byId('rack').appendChild(li);
  }
}

drawWave();
drawOverview();
drawRuler();
drawDb();
drawLevels();
buildRack();
```
